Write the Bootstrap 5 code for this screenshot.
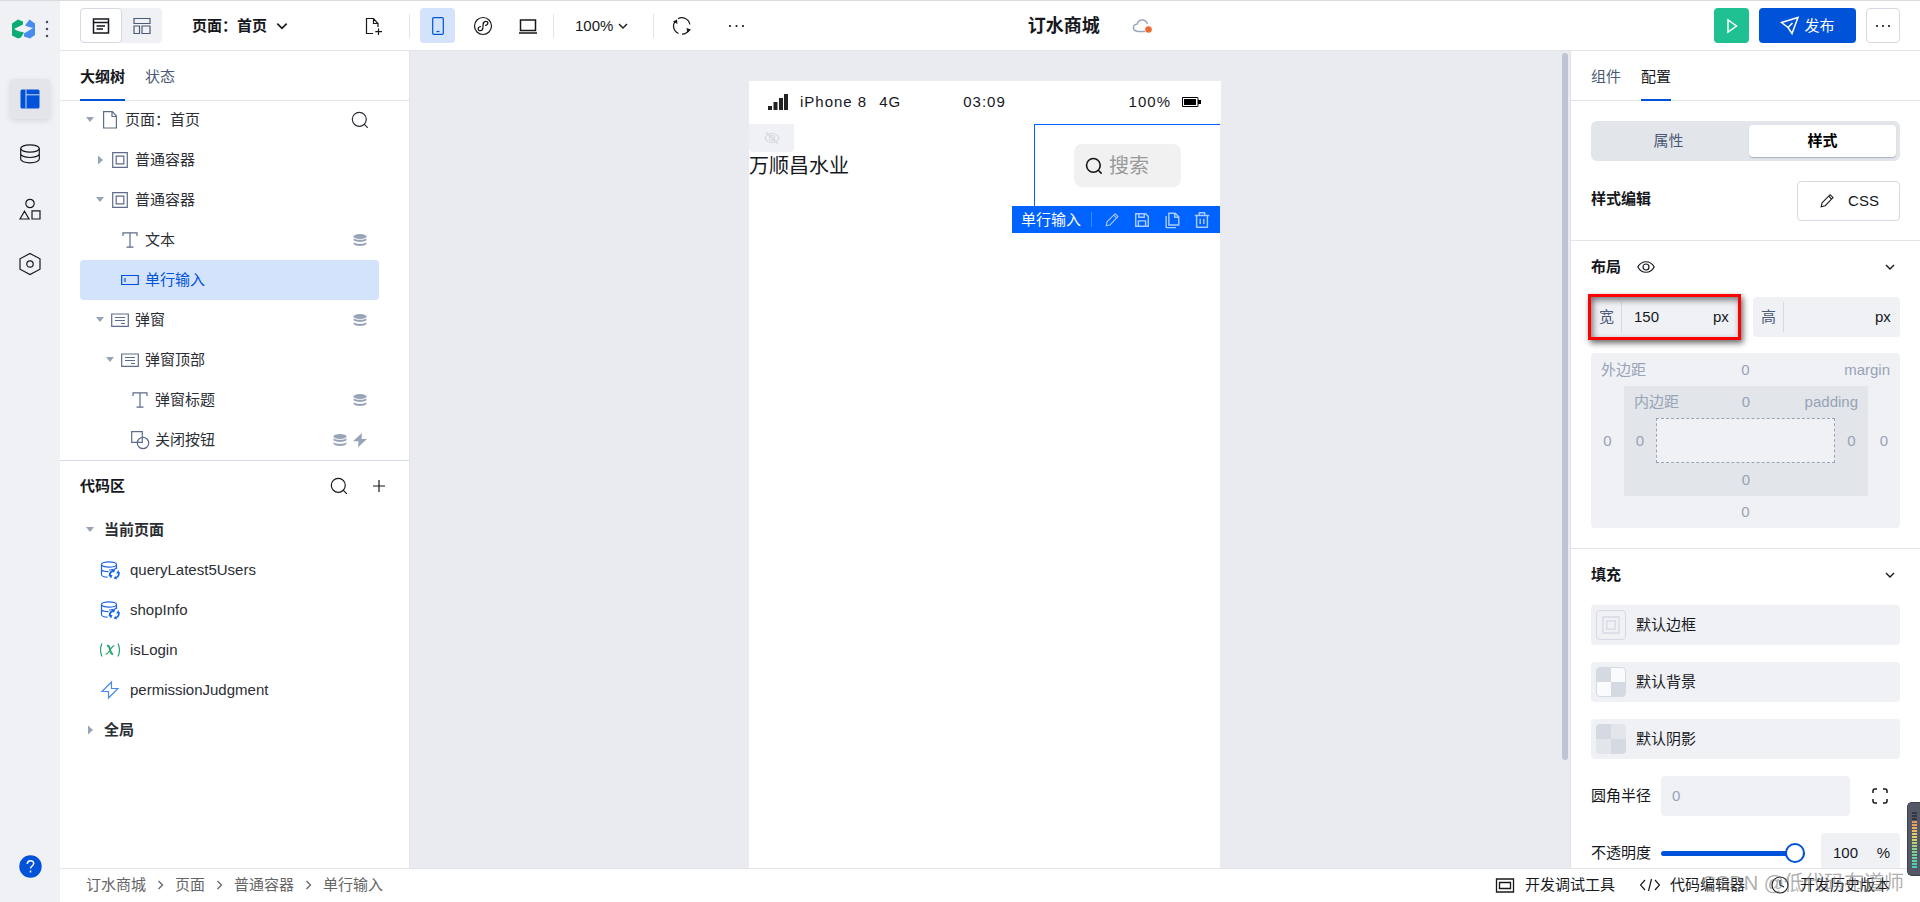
<!DOCTYPE html>
<html lang="zh-CN">
<head>
<meta charset="utf-8">
<meta name="viewport" content="width=device-width, initial-scale=1">
<title>订水商城</title>
<link href="https://cdn.jsdelivr.net/npm/bootstrap@5.3.0/dist/css/bootstrap.min.css" rel="stylesheet">
<style>
:root{--ink:#16181d;--sub:#4b5b76;--mute:#97a3b7;--line:#e2e4ea;--soft:#f0f1f5;--brand:#0052d9;--pick:#d3e3fc}
body{font-family:"Liberation Sans","Noto Sans CJK SC",sans-serif;font-size:15px;line-height:20px;color:var(--ink);border-top:1px solid #d9dadc;overflow:hidden}
svg{display:block;flex:none;fill:none;stroke:currentColor;stroke-width:1.2}
.btn{--bs-btn-padding-x:0;--bs-btn-padding-y:0;--bs-btn-font-size:15px;--bs-btn-line-height:20px;--bs-btn-border-radius:4px;--bs-btn-border-width:0;--bs-btn-color:var(--ink);display:inline-flex;align-items:center;justify-content:center;white-space:nowrap}
.ic{width:20px;height:20px}
.g8{gap:8px}.g10{gap:10px}.g20{gap:20px}.g25{gap:25px}
/* rail */
.rail{width:60px;background:var(--soft);flex:none}
.rail .btn{width:40px;height:40px}
.rail nav{gap:15px;padding-top:38px}
.rail .btn.on{background:#e3e5eb;color:var(--brand);box-shadow:0 2px 6px #0000001a}
/* top bar */
.topbar{height:50px;border-bottom:1px solid var(--line);padding-right:20px}
.top-start{width:52%;margin-right:11px}
.top-panel{width:349px;padding-left:20px;padding-right:24px}
.page-pick{margin-left:30px}
.sq{width:35px;height:35px}
.view-set{background:var(--soft);border-radius:4px}
.view-set .btn{width:40px;height:35px;color:var(--sub)}
.view-set .btn.on{width:42px;background:#fff;border:1px solid #d5d9e3;color:var(--ink)}
.btn.dev-on{background:var(--pick);color:var(--brand)}
.tools{margin-left:10px}
.vline{width:1px;height:24px;background:var(--line)}
.zoom-pick{margin:0 24px 0 21px}
.app-name{font-size:18px;line-height:24px}
.cloud{margin-left:32px}
.btn.run{background:#1fc192;color:#fff}
.btn.pub{background:var(--brand);color:#fff;width:97px;height:35px}
.btn.more{width:34px;height:35px;border:1px solid #d5d9e3}
/* side panels */
.sidebar-l{width:350px;border-right:1px solid var(--line);flex:none}
.sidebar-r{width:350px;border-left:1px solid var(--line);flex:none}
.tabs{height:50px;padding-left:20px;gap:20px;border-bottom:1px solid var(--line);flex:none}
.tabs .nav-link{padding:4px 0 0;height:50px;color:var(--sub);background:none;border:0;border-bottom:2px solid transparent}
.tabs .nav-link.active{color:var(--ink);border-color:var(--brand)}
.tree{padding-left:20px;padding-right:30px;border-bottom:1px solid #d5dae3;height:361px;flex:none;margin:-1px 0 0}
.tree .btn,.codes .btn{width:100%;height:40px;justify-content:flex-start;color:#2b2e34}
.tree .btn{padding-right:9px}
.tree .btn.on{background:var(--pick);color:var(--brand)}
.tree .btn.on .ic{color:var(--brand)}
.tree .ic{color:#5d6c88;margin-right:5px}
.tree .mk{color:var(--mute);width:20px;height:20px}
.caret{width:20px;height:20px;fill:var(--mute);stroke:none}
.btn.lv1{padding-left:10px}.btn.lv2{padding-left:20px}.btn.lv3{padding-left:30px}
.codes{padding-left:20px}
.codes .ic{margin:0 10px}
.codes-h{height:49px;padding-right:20px}
/* canvas */
.canvas{background:#eaebf0;min-width:0}
.phone{width:472px;margin-top:30px}
.statusbar{height:43px;background:#fff;padding:0 20px 2px 19px;letter-spacing:1px}
.screen{margin-right:1px;background:#fff}
.hide-tag{width:45px;height:28px;background:var(--soft);border-radius:0 0 4px 4px;color:#d5d9e2}
.t20{font-size:20px;line-height:28px}
.picked{width:186px;height:82px;border:1px solid #0062ff;border-right:0;border-bottom:0;padding:19px 39px 0}
.search{height:43px;border-radius:8px;background:#f1f1f1;padding-left:11px;gap:6px}
.search input{font-size:20px;line-height:28px;min-width:0;border:0;background:none;padding:0;width:60px}
.search input::placeholder{color:#999}
.search svg{stroke-width:1.8}
.act{top:82px;right:0;height:27px;background:#0062ff;color:#fff;padding:0 8px 0 9px;gap:10px;white-space:nowrap}
.act .vr{height:13px;align-self:center}
.act .btn{color:#a9cbff}
.gutter{width:10px;flex:none}
.thumb{width:6px;height:86.5%;margin:2px 0 0 2px;border-radius:3px;background:#bcc5d1}
/* settings */
.seg{background:#e2e5e9;border-radius:6px;height:40px;padding:4px;margin:20px 0}
.seg .btn{color:var(--sub);height:32px;flex:1;padding-right:7px}
.seg .btn.on{background:#fff;color:#000;box-shadow:0 1px 1px #aab3c3;flex:none;width:147px;padding:0}
.sec{padding:0 20px;border-bottom:1px solid var(--line)}
.css-row{margin-bottom:19px}
.btn.cssbtn{width:103px;height:40px;border:1px solid #d5d9e3;gap:12px}
.sec-t{height:52px}
.sizes{gap:15px;margin:4px 0 16px}
.sizes .fld{flex:1 1 0;padding-right:9px;min-width:0}
.fld{background:var(--soft);border-radius:4px;height:40px}
.fld input,.bm input{border:0;background:none;padding:0;min-width:0;color:var(--ink)}
.fld .num{width:70px;padding-left:12px}
.fld input::placeholder{color:var(--mute)}
.fld select{border:0;background:none;appearance:none;padding:0;color:var(--ink)}
.fld label{color:var(--sub);width:31px;padding-left:8px;border-right:1px solid #d5d9e2;height:30px;line-height:30px}
.ring::after{content:"";position:absolute;inset:-3px;border:3px solid #f00;box-shadow:2px 3px 6px #0009,inset 2px 3px 6px #0008;pointer-events:none}
.bm{display:grid;color:var(--mute)}
.bm input{color:var(--mute);text-align:center;width:100%}
.bm-o{grid-template:33px 110px 32px/33px 1fr 32px;background:var(--soft);border-radius:4px;margin-bottom:20px}
.bm-i{grid-template:32px 45px 33px/32px 1fr 33px;background:#e2e5e9}
.bm-h{grid-column:1/-1;display:grid;grid-template-columns:1fr 20px 1fr;padding:0 10px;align-items:center}
.bm-f{grid-column:1/-1}
.core{border:1px dashed var(--mute);background:var(--soft)}
.prev{width:30px;height:30px;margin:0 10px 0 5px;border-radius:4px;border:1px solid #d5d9e2;color:#d5d9e2}
.fills{gap:17px;margin-top:4px}
.btn.fill{width:100%;background:var(--soft);height:40px;justify-content:flex-start}
.chk{background:conic-gradient(#d5d9e2 25%,#fafbfc 0 50%,#d5d9e2 0 75%,#fafbfc 0);transform:scaleX(-1)}
.chk{background:conic-gradient(#fafbfc 25%,#d5d9e2 0 50%,#fafbfc 0 75%,#d5d9e2 0);transform:none}
.chk2{border-color:transparent;background:conic-gradient(#e2e5e9 25%,#d5d9e2 0 50%,#e2e5e9 0 75%,#d5d9e2 0) border-box}
.radius-f{margin-left:10px;width:189px;padding-left:11px}
.corners{margin-right:12px}
.slide{appearance:none;background:none;width:144px;height:20px;margin:0 0 0 10px}
.slide::-webkit-slider-runnable-track{height:5px;border-radius:3px;background:var(--brand)}
.slide::-webkit-slider-thumb{appearance:none;width:20px;height:20px;margin-top:-8px;border-radius:50%;background:#fff;border:2px solid var(--brand)}
.op-f{width:79px;padding:0 10px 0 12px}
/* footer */
.foot{height:34px;border-top:1px solid var(--line);flex:none}
.foot .breadcrumb{padding-left:26px;gap:8px;color:#666}
.breadcrumb a{color:#666;text-decoration:none}
.foot-tools{padding-right:30px}
.foot>*{padding-bottom:2px}
.brand-mark{top:869px;right:16px;font-size:20px;line-height:28px;color:#7779;pointer-events:none}
.meter{right:0;top:802px;width:13px;height:74px;border-radius:5px 0 0 5px;background:#535766;border:1px solid #3d414e;border-right:0;padding:8px 0 7px 4px}
.meter i{display:block;height:100%;width:5px;background:repeating-linear-gradient(#535766 0 1px,transparent 1px 3px),linear-gradient(#343743 17%,#ee915c 18%,#e6d45a 45%,#8ed683 65%,#3fd0b8)}
</style>
</head>
<body class="vh-100 d-flex">
<svg width="0" height="0" class="position-absolute">
<symbol id="i-db" viewBox="0 0 20 20"><ellipse cx="10" cy="4.500" rx="9.300" ry="3.700"/><path d="M.7 4.500v10.600c0 2 4 3.700 9.300 3.700s9.300-1.700 9.300-3.700V4.500M.7 9.800c0 2 4 3.700 9.300 3.700s9.300-1.700 9.300-3.700"/></symbol>
<symbol id="i-mk" viewBox="0 0 20 20"><g fill="currentColor" stroke="none"><ellipse cx="10" cy="6.400" rx="6.500" ry="2.500"/><path d="M3.500 8.200c2.500 2 10.500 2 13 0v2c-2.500 2.300-10.500 2.300-13 0zM3.500 12.200c2.500 2 10.500 2 13 0v1.500c-1.500 3-11.500 3-13 0z"/></g></symbol>
<symbol id="i-bolt" viewBox="0 0 20 20"><path fill="currentColor" stroke="none" d="M12 3 3 11.200h5.500L8 17.200 17 9h-5.500z"/></symbol>
<symbol id="i-find" viewBox="0 0 20 20"><circle cx="9.300" cy="9.300" r="7"/><path d="m14.200 14.200 3.600 3.600"/></symbol>
<symbol id="i-box" viewBox="0 0 20 20"><path d="M2.700 2.700h14.600v14.600H2.700zM6.200 6.200h7.600v7.600H6.200z"/></symbol>
<symbol id="i-t" viewBox="0 0 20 20"><path d="M3 6V2.800h14V6M10 3v14.200M6.500 17.200h7"/></symbol>
<symbol id="i-in" viewBox="0 0 20 20"><path d="M1.700 5.500h16.600v9H1.700zM5 8v4"/></symbol>
<symbol id="i-dlg" viewBox="0 0 20 20"><path d="M1.700 4h16.600v12.300H1.700zM5 7.500h10M5 10.500h10M11 13.500h4"/></symbol>
<symbol id="i-file" viewBox="0 0 20 20"><path d="M3.600 1.700h8.800l4 4.300v12H3.600zM12 2v4.500h4"/></symbol>
<symbol id="i-shape" viewBox="0 0 20 20"><path d="M1.700 1.700h10.600v10.600H1.700z"/><circle cx="13" cy="13" r="5.700"/></symbol>
<symbol id="i-dn" viewBox="0 0 12 12"><path stroke-width="1.400" d="m2 4 4 4 4-4"/></symbol>
<symbol id="i-rt" viewBox="0 0 12 12"><path stroke-width="1.300" d="m4 2 4 4-4 4"/></symbol>
<symbol id="c-dn" viewBox="0 0 20 20"><path d="M6 7h8l-4 5z"/></symbol>
<symbol id="c-rt" viewBox="0 0 20 20"><path d="M8 5.500v9l5-4.500z"/></symbol>
<symbol id="i-pen" viewBox="0 0 20 20"><path d="m3.500 16.500 1-4.500L13.500 3l3.200 3.200L8 15.200zM12 4.700 15 8"/></symbol>
<symbol id="i-q" viewBox="0 0 20 20"><ellipse cx="9" cy="4.500" rx="7.500" ry="2.700"/><path d="M1.500 4.500v10c0 1.500 3 2.600 6 2.600M1.500 9c0 1.600 3 2.700 7 2.700M16.500 4.500V9M16.500 7c0 2-3 3-7.500 3"/><path stroke-width="1.800" d="M9.800 16c-.5-3 1.200-4.500 3.200-5.200M18.800 12.500c.5 3-1.500 5-3.800 5.500"/><path fill="currentColor" stroke="none" d="m11.500 9.500 3.500.5-1 3zM17 19.500l-3.500-1 2-2.500zM8.500 15h4l-1.500 3.500zM19.700 13.500h-3.500l2-3.500z"/></symbol>
</svg>

<aside class="rail d-flex flex-column align-items-center pb-3">
  <div class="d-flex align-items-center mt-3 ps-2 w-100 gap-1">
    <svg width="32" height="24" viewBox="0 0 32 24"><g stroke="none"><path fill="#0bab74" d="M4 6.500 10 2.500l5 2v3L6 12l4 2 6 1.500-3 5L10 21.500l-6-3z"/><path fill="#4a8bf0" d="m21.500 2.500 5.500 4v11.500l-5 3.500-6-2v-3L25 11l-4-1-4-1.500z"/></g></svg>
    <svg width="6" height="18" viewBox="0 0 6 18"><path stroke="#444b59" stroke-width="2.500" stroke-linecap="round" d="M3 2h0M3 9h0M3 16h0"/></svg>
  </div>
  <nav class="d-flex flex-column flex-grow-1">
    <button class="btn on" aria-label="设计"><svg width="20" height="20" viewBox="0 0 20 20"><rect x=".5" y=".5" width="19" height="19" rx="1.500" fill="currentColor" stroke="none"/><path stroke="#cfdffa" stroke-width="1" d="M6 .5v19M6 5.800h13.500"/></svg></button>
    <button class="btn" aria-label="数据"><svg width="20" height="20"><use href="#i-db"/></svg></button>
    <button class="btn" aria-label="组件"><svg width="22" height="22" viewBox="0 0 22 22"><circle cx="11" cy="5.500" r="4.200"/><path d="M5.500 13.300 10 21H1zM13 12.800h8V21h-8z"/></svg></button>
    <button class="btn" aria-label="设置"><svg width="22" height="24" viewBox="0 0 22 24"><path d="m11 1.500 10 5.300v10.400l-10 5.300-10-5.300V6.800z"/><circle cx="11" cy="12" r="3.200"/></svg></button>
  </nav>
  <button class="btn" aria-label="帮助"><svg width="23" height="23" viewBox="0 0 23 23"><circle cx="11.500" cy="11.500" r="11.200" fill="#0052d9" stroke="none"/><path stroke="#fff" stroke-width="1.500" d="M8.300 9c0-4.200 6.400-4.200 6.400-.5 0 2.500-3.200 2.500-3.200 5M11.500 15.500v2"/></svg></button>
</aside>

<div class="d-flex flex-column flex-grow-1 overflow-hidden">
  <header class="topbar d-flex align-items-center flex-shrink-0">
    <div class="top-start d-flex align-items-center">
      <div class="top-panel d-flex align-items-center">
        <div class="view-set d-flex">
          <button class="btn on" aria-label="大纲"><svg width="18" height="18" viewBox="0 0 18 18"><path stroke-width="1.500" d="M1.500 2h15v14h-15zM1.500 5.500h15M4.500 9h8.500M4.500 12h6.500"/></svg></button>
          <button class="btn" aria-label="布局"><svg width="18" height="18" viewBox="0 0 18 18"><path d="M1 1.500h16v5H1zM1 9h5.500v7.500H1zM9 9h8v7.500H9z"/></svg></button>
        </div>
        <button class="btn fw-bold g8 page-pick">页面：首页<svg width="14" height="14"><use href="#i-dn"/></svg></button>
        <button class="btn ms-auto" aria-label="新建页面"><svg width="22" height="20" viewBox="0 0 22 20"><path d="M10 17.500H3.500v-15h7l4.500 5V11M10.500 3v4.500H15M15.500 12.500v6.500M12.300 15.700H19"/></svg></button>
      </div>
      <div class="vline"></div>
      <div class="tools d-flex g10">
        <button class="btn sq dev-on" aria-label="手机"><svg width="14" height="20" viewBox="0 0 14 20"><rect x="1.700" y="1.700" width="10.600" height="16.600" rx="1"/><path d="M5.500 15.500h3"/></svg></button>
        <button class="btn sq" aria-label="小程序"><svg width="20" height="20" viewBox="0 0 20 20"><circle cx="10" cy="10" r="8.500"/><path d="M8 10.500c-4 .5-3.500 4.500-.5 4.200 2.500-.4 2.500-2 2.500-4.700s0-4.300 2.500-4.700c3-.3 3.500 3.700-.5 4.200"/></svg></button>
        <button class="btn sq" aria-label="电脑"><svg width="20" height="20" viewBox="0 0 20 20"><path stroke-width="1.500" d="M2.500 4h15v10.500h-15zM1 17h18"/></svg></button>
      </div>
      <div class="vline ms-2"></div>
      <button class="btn gap-1 zoom-pick">100%<svg width="12" height="12"><use href="#i-dn"/></svg></button>
      <div class="vline"></div>
      <button class="btn ms-3" aria-label="刷新"><svg width="24" height="20" viewBox="0 0 24 20"><path d="M8.500 17.500A8 8 0 0 1 5 5.500M8 2.800A8 8 0 0 1 19.800 8.500M19 13.500a8 8 0 0 1-7 4.700"/><path fill="currentColor" stroke="none" d="m3 5.500 4-2 .5 4.500zM21 13.500l-3.500 3.500-1-5z"/></svg></button>
      <button class="btn ms-4 ps-2" aria-label="更多"><svg width="20" height="4" viewBox="0 0 20 4"><path stroke-width="2.200" stroke-linecap="round" d="M4 2h0M10.500 2h0M17 2h0"/></svg></button>
    </div>
    <h1 class="app-name m-0 fw-bold">订水商城</h1>
    <svg class="cloud" width="22" height="16" viewBox="0 0 22 16"><path stroke="#9aa6b9" stroke-width="1.500" d="M13 13.500H6C.5 13-.2 7 5 6 6.500.5 14 .5 15.500 6"/><circle cx="16.500" cy="11.500" r="3.300" fill="#ec6b33" stroke="none"/></svg>
    <div class="d-flex ms-auto g10">
      <button class="btn sq run" aria-label="运行"><svg width="14" height="16" viewBox="0 0 14 16"><path stroke-width="1.500" d="M3 2v12l8.500-6z"/></svg></button>
      <button class="btn gap-1 pub"><svg width="20" height="20" viewBox="0 0 20 20"><path stroke-width="1.500" d="m1.500 6.500 16.500-5-6 16-4-6zM8 11.500l4.500-4.500"/></svg>发布</button>
      <button class="btn more" aria-label="更多"><svg width="18" height="4" viewBox="0 0 18 4"><path stroke-width="2.200" stroke-linecap="round" d="M3 2h0M9 2h0M15 2h0"/></svg></button>
    </div>
  </header>

  <div class="d-flex flex-grow-1 overflow-hidden">
    <section class="sidebar-l d-flex flex-column">
      <div class="nav tabs"><button class="nav-link active fw-bold">大纲树</button><button class="nav-link">状态</button></div>
      <ul class="tree list-unstyled">
        <li><button class="btn"><svg class="caret"><use href="#c-dn"/></svg><svg class="ic"><use href="#i-file"/></svg>页面：首页<svg class="ms-auto" width="20" height="20"><use href="#i-find"/></svg></button></li>
        <li><button class="btn lv1"><svg class="caret"><use href="#c-rt"/></svg><svg class="ic"><use href="#i-box"/></svg>普通容器</button></li>
        <li><button class="btn lv1"><svg class="caret"><use href="#c-dn"/></svg><svg class="ic"><use href="#i-box"/></svg>普通容器</button></li>
        <li><button class="btn lv2"><span class="caret"></span><svg class="ic"><use href="#i-t"/></svg>文本<svg class="mk ms-auto"><use href="#i-mk"/></svg></button></li>
        <li><button class="btn lv2 on"><span class="caret"></span><svg class="ic"><use href="#i-in"/></svg>单行输入</button></li>
        <li><button class="btn lv1"><svg class="caret"><use href="#c-dn"/></svg><svg class="ic"><use href="#i-dlg"/></svg>弹窗<svg class="mk ms-auto"><use href="#i-mk"/></svg></button></li>
        <li><button class="btn lv2"><svg class="caret"><use href="#c-dn"/></svg><svg class="ic"><use href="#i-dlg"/></svg>弹窗顶部</button></li>
        <li><button class="btn lv3"><span class="caret"></span><svg class="ic"><use href="#i-t"/></svg>弹窗标题<svg class="mk ms-auto"><use href="#i-mk"/></svg></button></li>
        <li><button class="btn lv3"><span class="caret"></span><svg class="ic"><use href="#i-shape"/></svg>关闭按钮<svg class="mk ms-auto"><use href="#i-mk"/></svg><svg class="mk"><use href="#i-bolt"/></svg></button></li>
      </ul>
      <div class="codes">
        <div class="codes-h d-flex align-items-center g20">
          <b class="me-auto">代码区</b>
          <a href="#" class="text-reset" aria-label="搜索"><svg width="20" height="20"><use href="#i-find"/></svg></a>
          <a href="#" class="text-reset" aria-label="新增"><svg width="20" height="20" viewBox="0 0 20 20"><path d="M10 4v12M4 10h12"/></svg></a>
        </div>
        <ul class="list-unstyled m-0">
          <li><button class="btn fw-bold gap-1"><svg class="caret"><use href="#c-dn"/></svg>当前页面</button></li>
          <li><button class="btn lv1"><svg class="ic" color="#1c66e5"><use href="#i-q"/></svg>queryLatest5Users</button></li>
          <li><button class="btn lv1"><svg class="ic" color="#1c66e5"><use href="#i-q"/></svg>shopInfo</button></li>
          <li><button class="btn lv1"><svg class="ic" viewBox="0 0 20 20" color="#2ba471"><path d="M2 3.500q-3 6.500 0 13M18 3.500q3 6.500 0 13"/><path stroke-width="2" d="M7 6c4-1.500 2 8.500 6 8"/><path d="M14.500 6c-3-1.500-5.500 9.500-9 8"/></svg>isLogin</button></li>
          <li><button class="btn lv1"><svg class="ic" viewBox="0 0 20 20" color="#4a8bf0"><path d="M11.500 2 2 11.500h6.500v6.500L18 8.500h-6.500z"/></svg>permissionJudgment</button></li>
          <li><button class="btn fw-bold gap-1"><svg class="caret"><use href="#c-rt"/></svg>全局</button></li>
        </ul>
      </div>
    </section>

    <main class="canvas d-flex flex-grow-1">
      <div class="flex-grow-1 d-flex justify-content-center">
        <div class="phone d-flex flex-column">
          <div class="statusbar d-flex align-items-center">
            <span class="d-flex align-items-center w-50"><svg width="20" height="16" viewBox="0 0 20 16"><path fill="#222" stroke="none" d="M0 12h4v4H0zM5.500 8h4v8h-4zM11 4h4v12h-4zM16 0h4v16h-4z"/></svg><span class="ms-2 ps-1">iPhone 8</span><span class="ms-2 ps-1">4G</span></span>
            <span>03:09</span>
            <span class="d-flex align-items-center justify-content-end w-50">100%<svg class="ms-2" width="22" height="12" viewBox="0 0 22 12"><path fill="#000" stroke="none" fill-rule="evenodd" d="M4 1h14q1.500 0 1.500 1.500v1.500H22v4h-2.500v1.500Q19.500 11 18 11H4q-1 0-1-1V2q0-1 1-1zm0 1v8h14.500V2z"/><path fill="#000" stroke="none" d="M5 3h12v6H5z"/></svg></span>
          </div>
          <div class="screen flex-grow-1">
            <div class="d-flex justify-content-between position-relative">
              <div>
                <div class="hide-tag d-flex align-items-center justify-content-center"><svg width="16" height="14" viewBox="0 0 16 14"><path d="M.7 7c3.500-6 11-6 14.600 0-3.600 6-11.100 6-14.600 0zM2 1l12 12"/><circle cx="8" cy="7" r="2.500"/></svg></div>
                <div class="t20">万顺昌水业</div>
              </div>
              <div class="picked">
                <div class="search d-flex align-items-center"><svg width="18" height="18" viewBox="0 0 20 20"><circle cx="9.300" cy="9.300" r="7.600"/><path d="m14.500 14.500 4 4"/></svg><input type="text" placeholder="搜索" aria-label="搜索"></div>
              </div>
              <div class="act position-absolute d-flex align-items-center">
                <span>单行输入</span><div class="vr"></div>
                <button class="btn" aria-label="编辑"><svg width="20" height="18" viewBox="0 0 20 20"><use href="#i-pen"/></svg></button>
                <button class="btn" aria-label="保存"><svg width="20" height="18" viewBox="0 0 20 20"><path stroke-width="1.600" d="M3 3h11l3 3v11H3zM6.500 3v4h6V3M6 17v-6h8v6"/></svg></button>
                <button class="btn" aria-label="复制"><svg width="20" height="18" viewBox="0 0 20 20"><path stroke-width="1.600" d="M6.500 2.500h7l4 4v9h-11zM13 3v4h4M3.500 5.500v13h11"/></svg></button>
                <button class="btn" aria-label="删除"><svg width="20" height="18" viewBox="0 0 20 20"><path stroke-width="1.600" d="M2 5h16M7 5V2h6v3M4 5v13h12V5M8 8.500v6M12 8.500v6"/></svg></button>
              </div>
            </div>
          </div>
        </div>
      </div>
      <div class="gutter"><div class="thumb"></div></div>
    </main>

    <aside class="sidebar-r overflow-hidden">
      <div class="nav tabs"><button class="nav-link">组件</button><button class="nav-link active">配置</button></div>
      <section class="sec">
        <div class="seg d-flex"><button class="btn">属性</button><button class="btn on fw-bold">样式</button></div>
        <div class="css-row d-flex justify-content-between"><b class="pt-2">样式编辑</b><button class="btn cssbtn"><svg width="18" height="18"><use href="#i-pen"/></svg>CSS</button></div>
      </section>
      <section class="sec">
        <div class="sec-t d-flex align-items-center"><b>布局</b><svg class="ms-3" width="18" height="14" viewBox="0 0 18 14"><path d="M.8 7c4-7 12.400-7 16.400 0-4 7-12.400 7-16.400 0z"/><circle cx="9" cy="7" r="3"/></svg><svg class="ms-auto me-1" width="12" height="12"><use href="#i-dn"/></svg></div>
        <div class="sizes d-flex">
          <div class="fld ring position-relative d-flex align-items-center"><label for="w">宽</label><input id="w" type="text" value="150" class="num"><select class="ms-auto" aria-label="宽度单位"><option>px</option></select></div>
          <div class="fld d-flex align-items-center"><label for="h">高</label><input id="h" type="text" class="num"><select class="ms-auto" aria-label="高度单位"><option>px</option></select></div>
        </div>
        <div class="bm bm-o">
          <div class="bm-h"><span>外边距</span><input value="0" aria-label="上外边距"><span class="text-end">margin</span></div>
          <input value="0" aria-label="左外边距">
          <div class="bm bm-i">
            <div class="bm-h"><span>内边距</span><input value="0" aria-label="上内边距"><span class="text-end">padding</span></div>
            <input value="0" aria-label="左内边距"><div class="core"></div><input value="0" aria-label="右内边距">
            <input class="bm-f" value="0" aria-label="下内边距">
          </div>
          <input value="0" aria-label="右外边距">
          <input class="bm-f" value="0" aria-label="下外边距">
        </div>
      </section>
      <section class="sec border-0">
        <div class="sec-t d-flex align-items-center"><b>填充</b><svg class="ms-auto me-1" width="12" height="12"><use href="#i-dn"/></svg></div>
        <div class="fills d-flex flex-column">
          <button class="btn fill"><span class="prev d-flex align-items-center justify-content-center"><svg width="22" height="22"><use href="#i-box"/></svg></span>默认边框</button>
          <button class="btn fill"><span class="prev chk"></span>默认背景</button>
          <button class="btn fill"><span class="prev chk2"></span>默认阴影</button>
          <div class="d-flex align-items-center"><label for="r">圆角半径</label><div class="fld radius-f d-flex align-items-center"><input id="r" type="text" placeholder="0" class="w-100"></div><svg class="corners ms-auto" width="16" height="16" viewBox="0 0 16 16"><path stroke-width="1.500" d="M1 5V3q0-2 2-2h2M11 1h2q2 0 2 2v2M15 11v2q0 2-2 2h-2M5 15H3q-2 0-2-2v-2"/></svg></div>
          <div class="d-flex align-items-center"><label for="o">不透明度</label><input id="o" class="slide" type="range" value="100"><div class="fld op-f d-flex align-items-center ms-auto"><input type="text" value="100" aria-label="不透明度数值" class="w-50 me-auto">%</div></div>
        </div>
      </section>
    </aside>
  </div>

  <footer class="foot d-flex align-items-center">
    <ol class="breadcrumb align-items-center m-0">
      <li><a href="#">订水商城</a></li><li><svg width="13" height="12"><use href="#i-rt"/></svg></li>
      <li><a href="#">页面</a></li><li><svg width="13" height="12"><use href="#i-rt"/></svg></li>
      <li><a href="#">普通容器</a></li><li><svg width="13" height="12"><use href="#i-rt"/></svg></li>
      <li><a href="#">单行输入</a></li>
    </ol>
    <div class="foot-tools d-flex ms-auto g25">
      <button class="btn g10"><svg width="20" height="20" viewBox="0 0 20 20"><path stroke-width="1.300" d="M1.500 4h17v13h-17zM4.500 7.500h11v6h-11z"/></svg>开发调试工具</button>
      <button class="btn g10"><svg width="20" height="16" viewBox="1 0 20 16"><path d="M6 3 1.500 8 6 13M16 3l4.500 5-4.500 5M12.500 2l-3 12"/></svg>代码编辑器</button>
      <button class="btn g10"><svg width="20" height="20" viewBox="0 0 20 20"><circle cx="10" cy="10" r="8"/><path d="M10 5v5l4 2"/></svg>开发历史版本</button>
    </div>
  </footer>
</div>
<div class="brand-mark position-absolute">CSDN @低代码布道师</div>
<div class="meter position-absolute"><i></i></div>
<script src="https://cdn.jsdelivr.net/npm/bootstrap@5.3.0/dist/js/bootstrap.bundle.min.js"></script>
</body>
</html>
